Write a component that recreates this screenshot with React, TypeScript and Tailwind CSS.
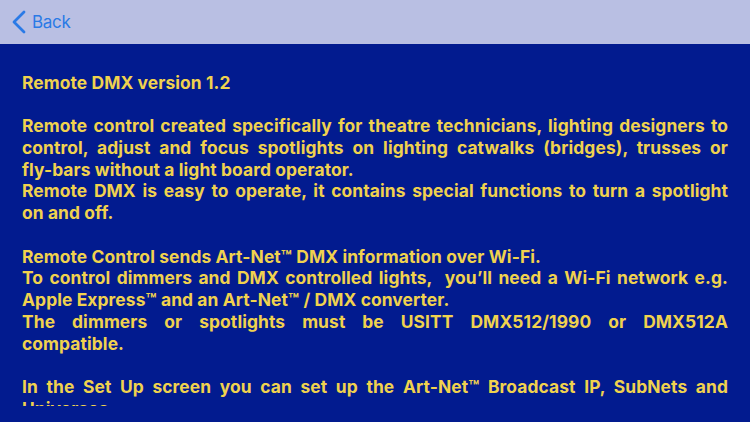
type Line = { text: string; full?: boolean };

// Each paragraph is a list of lines; "full" lines are stretched edge to edge.
const paragraphs: Line[][] = [
  [{ text: "Remote DMX version 1.2" }],
  [
    { text: "Remote control created specifically for theatre technicians, lighting designers to", full: true },
    { text: "control, adjust and focus spotlights on lighting catwalks (bridges), trusses or", full: true },
    { text: "fly-bars without a light board operator." },
    { text: "Remote DMX is easy to operate, it contains special functions to turn a spotlight", full: true },
    { text: "on and off." },
  ],
  [
    { text: "Remote Control sends Art-Net™ DMX information over Wi-Fi." },
    { text: "To control dimmers and DMX controlled lights,  you’ll need a Wi-Fi network e.g.", full: true },
    { text: "Apple Express™ and an Art-Net™ / DMX converter." },
    { text: "The dimmers or spotlights must be USITT DMX512/1990 or DMX512A", full: true },
    { text: "compatible." },
  ],
  [
    { text: "In the Set Up screen you can set up the Art-Net™ Broadcast IP, SubNets and", full: true },
    { text: "Universes." },
  ],
];

export default function App() {
  return (
    <div className="w-[750px] h-[422px] overflow-hidden bg-[#021b8f] font-['Inter',sans-serif]">
      <header className="h-[44px] bg-[#b9bfe3] flex items-center pl-[11px]">
        <button className="flex items-center gap-[6px] text-[#2a7ae6]">
          <svg width="15" height="24" viewBox="0 0 15 24" fill="none">
            <path
              d="M13 2 L3 12 L13 22"
              stroke="currentColor"
              strokeWidth="2.8"
              strokeLinecap="round"
              strokeLinejoin="round"
            />
          </svg>
          <span className="text-[17px] leading-none tracking-[-0.3px] font-normal">Back</span>
        </button>
      </header>

      <div className="h-[362px] overflow-hidden pt-[27.5px] px-[22px]">
        <div className="flex flex-col gap-[21.75px] text-[#f0d24e] text-[17.4px] font-bold leading-[21.75px] tracking-[0.1px]">
          {paragraphs.map((para, i) => (
            <div key={i}>
              {para.map((line, j) => (
                <p
                  key={j}
                  className={
                    line.full
                      ? "whitespace-pre text-justify [text-align-last:justify]"
                      : "whitespace-pre"
                  }
                >
                  {line.text}
                </p>
              ))}
            </div>
          ))}
        </div>
      </div>
    </div>
  );
}
